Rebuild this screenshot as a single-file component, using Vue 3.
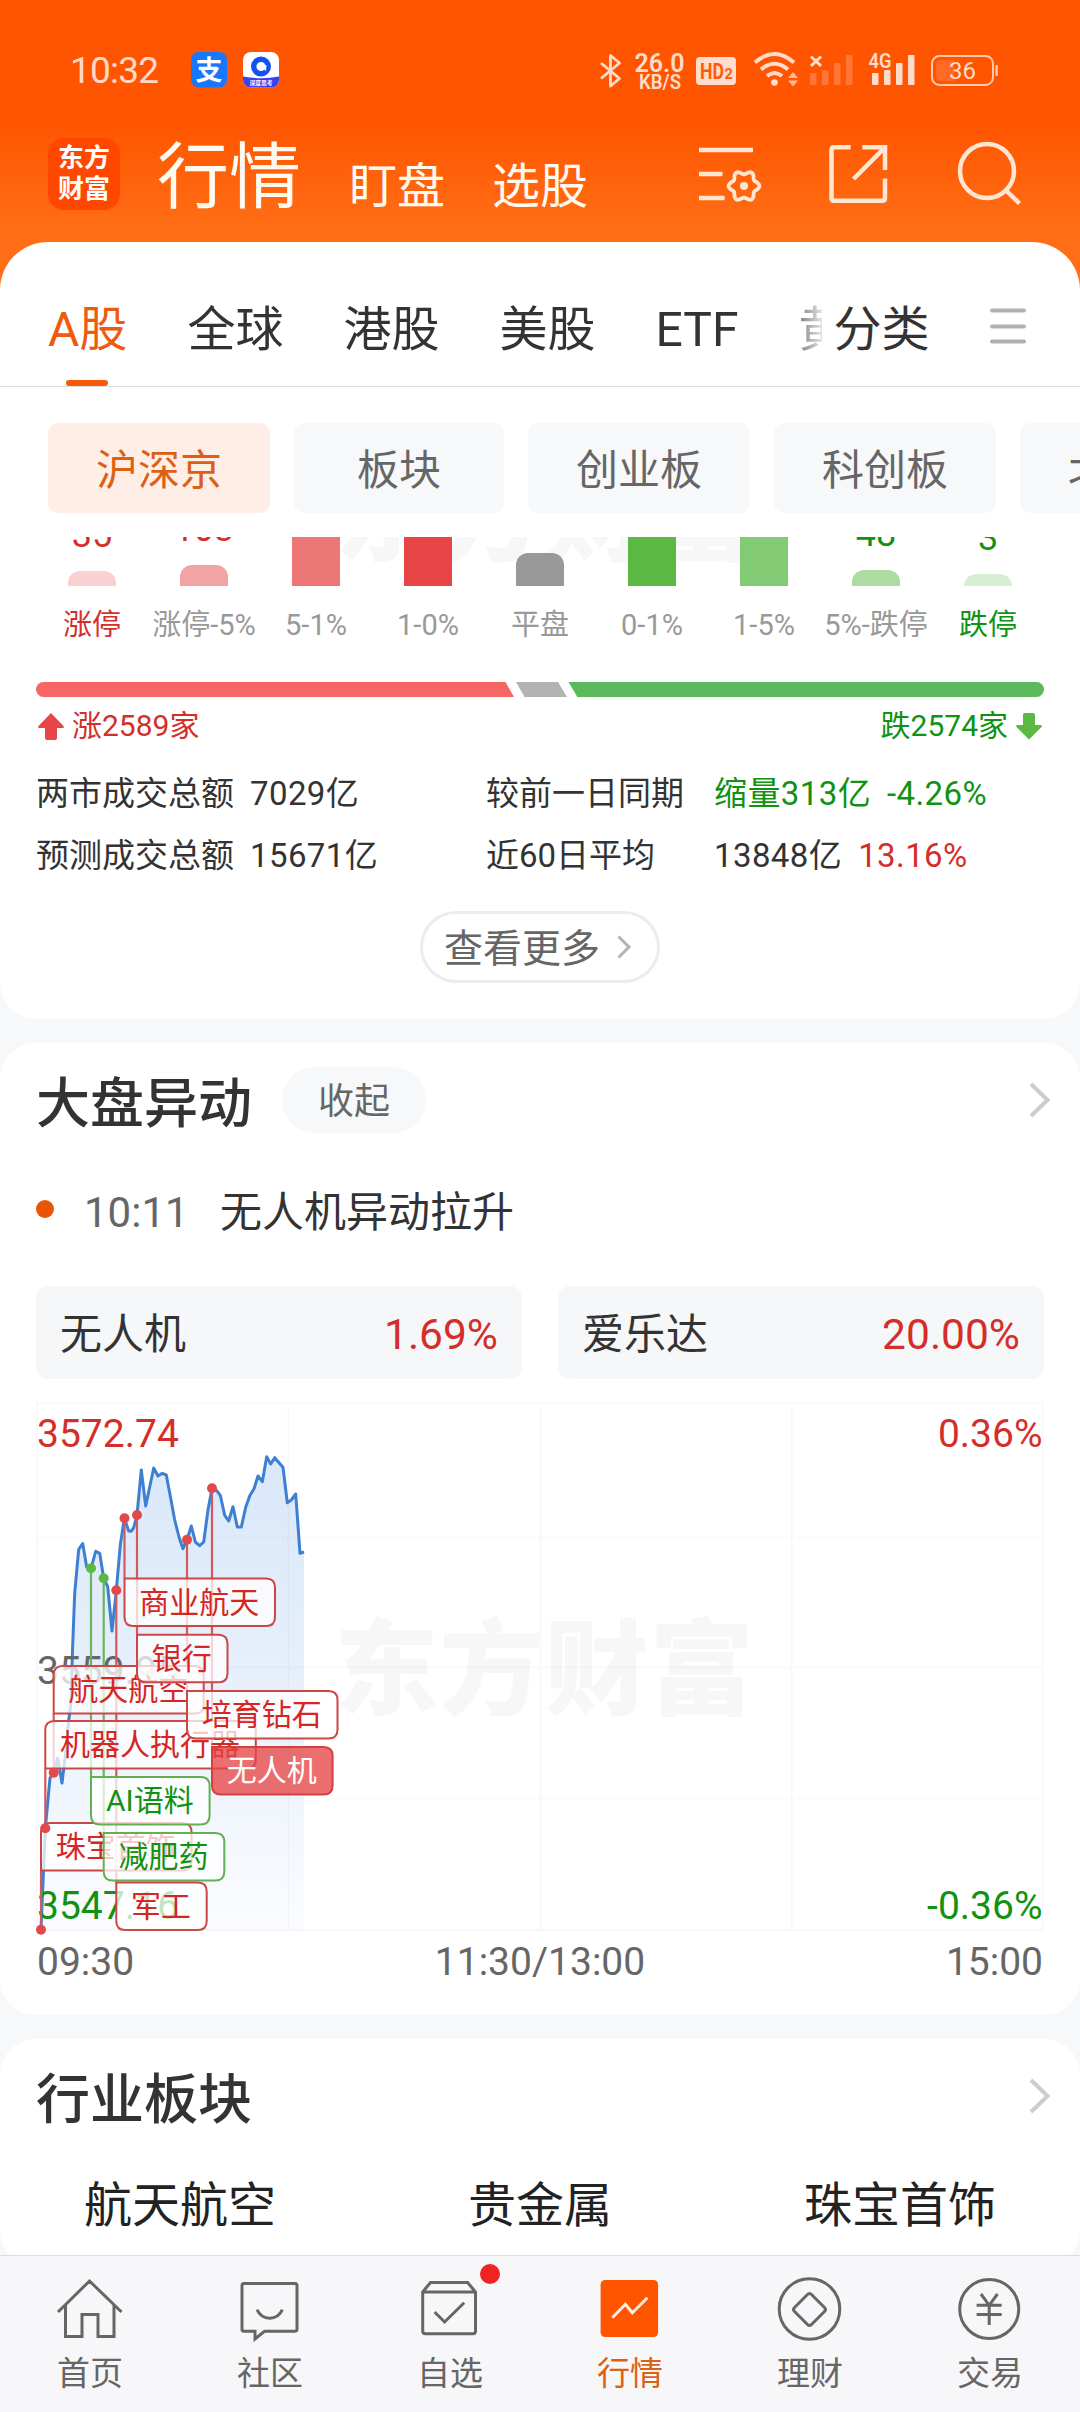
<script setup>
const marketTabs = ['全球', '港股', '美股', 'ETF', '黄金']
const chips = ['沪深京', '板块', '创业板', '科创板', '北交所']

const columns = [
  { label: '涨停', tone: 'up', count: '35', side: 'up', h: 15, color: '#f9d1d1' },
  { label: '涨停-5%', tone: '', count: '103', side: 'up', h: 21, color: '#f2a3a5' },
  { label: '5-1%', tone: '', h: 90, color: '#ed7676' },
  { label: '1-0%', tone: '', h: 90, color: '#e74646' },
  { label: '平盘', tone: '', h: 33, color: '#999999' },
  { label: '0-1%', tone: '', h: 90, color: '#5bb843' },
  { label: '1-5%', tone: '', h: 90, color: '#82ca74' },
  { label: '5%-跌停', tone: '', count: '48', side: 'down', h: 16, color: '#addca1' },
  { label: '跌停', tone: 'down', count: '3', side: 'down', h: 12, color: '#d6eed1' }
]

const price = [
  [41, 1929.7], [45.3, 1828.3], [50, 1778], [53.7, 1772.7], [57.7, 1758], [62, 1783], [66, 1750], [68.5, 1722],
  [71, 1703], [72.3, 1656], [74.7, 1593], [78.7, 1549.3], [82.7, 1543.5], [86.7, 1567], [91, 1568.3], [95.7, 1551.3],
  [99.7, 1553.3], [103.7, 1578.3], [107.7, 1586.7], [112, 1631], [116.3, 1590.3], [120.3, 1545], [124.3, 1518.3],
  [128.7, 1531], [131, 1531.3], [133.6, 1528], [137, 1515], [141.3, 1470], [145.7, 1506], [149.7, 1487], [153.7, 1468],
  [158, 1476], [162.3, 1473.3], [166.3, 1475], [170.7, 1498.3], [174.7, 1520], [179, 1537], [183, 1548.7],
  [187, 1539.7], [191.3, 1526], [195.3, 1542], [199.7, 1545.7], [203.7, 1542], [208, 1510], [212, 1488.3],
  [216.7, 1490.7], [220.3, 1495.3], [224.7, 1515.3], [228.7, 1521], [233, 1506.7], [237.3, 1527], [241.3, 1527],
  [245.7, 1507.3], [250, 1495.3], [254, 1488.7], [258, 1476], [262.3, 1481.7], [266.7, 1456.7], [270.7, 1464],
  [274.7, 1457.7], [279, 1462.7], [283, 1467.3], [287.3, 1502.7], [291.3, 1500], [295.7, 1494], [300, 1553.3], [304, 1552]
]
const line = price.map(p => p.join(',')).join(' ')
const area = line + ' 304,1930 41,1930'

// dot: point on the price line; top/w: the flag hung on the pole at that x
const flags = [
  { text: '航天航空', x: 53.7, top: 1666, w: 150, dot: 1772.7, tone: 'r', below: true },
  { text: '机器人执行器', x: 45.3, top: 1721, w: 210.5, dot: 1828.3, tone: 'r', below: true },
  { text: '珠宝首饰', x: 41, top: 1823, w: 150.5, dot: 1929.7, tone: 'r', below: true },
  { text: '商业航天', x: 124.5, top: 1578.5, w: 150.5, dot: 1518.3, tone: 'r' },
  { text: '银行', x: 137, top: 1634.7, w: 90.5, dot: 1515, tone: 'r' },
  { text: '培育钻石', x: 187, top: 1691, w: 150.5, dot: 1539.7, tone: 'r' },
  { text: '无人机', x: 212, top: 1747, w: 120.6, dot: 1488.3, tone: 'solid' },
  { text: 'AI语料', x: 91, top: 1777, w: 118.6, dot: 1568.3, tone: 'g' },
  { text: '减肥药', x: 103.7, top: 1833, w: 120.6, dot: 1578.3, tone: 'g' },
  { text: '军工', x: 116.3, top: 1882.5, w: 90.4, dot: 1590.3, tone: 'r' }
]
const H = 47.6
const R = 9
function flagPath(f) {
  const { x, w, top: y } = f
  const r = x + w
  const b = y + H
  if (f.below) {
    return `M${x} ${b}V${y + R}Q${x} ${y} ${x + R} ${y}H${r - R}Q${r} ${y} ${r} ${y + R}V${b - R}Q${r} ${b} ${r - R} ${b}Z`
  }
  return `M${x} ${y}H${r - R}Q${r} ${y} ${r} ${y + R}V${b - R}Q${r} ${b} ${r - R} ${b}H${x + R}Q${x} ${b} ${x} ${b - R}Z`
}

function gear(cx, cy) {
  let d = ''
  for (let i = 0; i < 72; i++) {
    const a = (i * Math.PI) / 36
    const r = 13.5 + 1.9 * Math.cos(6 * a)
    d += (i ? 'L' : 'M') + (cx + r * Math.cos(a)).toFixed(2) + ' ' + (cy + r * Math.sin(a)).toFixed(2)
  }
  return d + 'Z'
}
const gearPath = gear(744, 186)
</script>

<template>
  <div class="screen">
    <div class="status">
      <span class="clock">10:32</span>
      <svg class="apps" width="90" height="38" viewBox="190 52 90 38">
        <rect x="191" y="53" width="36" height="35.500" rx="8" fill="#1677ff" />
        <text x="209" y="81" font-size="27" font-weight="700" fill="#fff" text-anchor="middle">支</text>
        <clipPath id="appClip"><rect x="243" y="53" width="36" height="35.500" rx="8" /></clipPath>
        <g clip-path="url(#appClip)">
          <rect x="243" y="53" width="36" height="36" fill="#fff" />
          <path d="M243 77.500Q261 81 279 77.500V89H243Z" fill="#3a3df0" />
          <circle cx="261" cy="67.500" r="7.300" fill="none" stroke="#1350f0" stroke-width="5.400" />
          <path d="M261 67.500L266.500 66L266 72Z" fill="#fff" />
          <text x="261" y="86" font-size="5.800" font-weight="700" fill="#fff" text-anchor="middle">深度思考</text>
        </g>
      </svg>
      <svg class="signals" width="408" height="44" viewBox="596 48 408 44">
        <path d="M601 63L619.500 78.500L610.500 86V55.500L619.500 63L601 78.500" fill="none" stroke="#ffdccb" stroke-width="2.800" stroke-linejoin="round" />
        <text x="659.500" y="71.500" font-size="25" font-weight="600" text-anchor="middle" textLength="50" lengthAdjust="spacingAndGlyphs">26.0</text>
        <text x="660" y="88.500" font-size="19.500" font-weight="600" text-anchor="middle" textLength="42" lengthAdjust="spacingAndGlyphs">KB/S</text>
        <rect x="696" y="57" width="40" height="28" rx="4" fill="#ffdccb" />
        <text x="700" y="79" font-size="22" font-weight="700" class="cut" textLength="24" lengthAdjust="spacingAndGlyphs">HD</text>
        <text x="724.500" y="79" font-size="14.500" font-weight="700" class="cut">2</text>
        <g fill="none" stroke="#ffdccb" stroke-width="4">
          <path d="M755 62.500Q774.500 45.500 794 62.500" />
          <path d="M761 69.500Q774.500 58 788 69.500" />
          <path d="M767 76Q774.500 70 782 76" />
        </g>
        <circle cx="774.500" cy="82.500" r="3.300" fill="#ffdccb" />
        <path d="M788 78L793 72L798 78ZM788 80.500H798L793 86.500Z" fill="#ffb994" />
        <path d="M811 56.500L821 66M821 56.500L811 66" stroke="#ffdccb" stroke-width="3" />
        <g fill="#ff7637">
          <rect x="810" y="73" width="6.500" height="12" rx="1" />
          <rect x="822" y="70" width="6.500" height="15" rx="1" />
          <rect x="834" y="63" width="6.500" height="22" rx="1" />
          <rect x="846" y="55" width="6.500" height="30" rx="1" />
        </g>
        <text x="880" y="68" font-size="21" font-weight="600" text-anchor="middle" textLength="23" lengthAdjust="spacingAndGlyphs">4G</text>
        <g fill="#ffdccb">
          <rect x="872" y="73" width="6.500" height="12" rx="1" />
          <rect x="884" y="70" width="6.500" height="15" rx="1" />
          <rect x="896" y="63" width="6.500" height="22" rx="1" />
          <rect x="908" y="55" width="6.500" height="30" rx="1" />
        </g>
        <rect x="932" y="56" width="61" height="29" rx="7.500" fill="none" stroke="#ffc9ac" stroke-width="2" />
        <path d="M941 60H954V81H941Q936 81 936 76V65Q936 60 941 60Z" fill="#ff6a25" />
        <rect x="995.300" y="65" width="2.500" height="11" rx="1" fill="#ffc9ac" />
        <text x="962.500" y="79" font-size="24" text-anchor="middle">36</text>
      </svg>
    </div>

    <header class="head">
      <div class="logo"><span>东方</span><span>财富</span></div>
      <div class="main-title">行情</div>
      <div class="sub-title">盯盘</div>
      <div class="sub-title">选股</div>
      <div class="tools">
        <svg width="72" height="72" viewBox="694 138 72 72">
          <path d="M699 150H753M699 174H722.500M699 198H724.600" stroke-width="4.300" />
          <path :d="gearPath" stroke-width="3.800" />
          <circle cx="744" cy="186" r="4" class="dot" />
        </svg>
        <svg width="72" height="72" viewBox="822 138 72 72">
          <path d="M850.600 147.300H834Q831.500 147.300 831.500 149.800V198Q831.500 200.700 834 200.700H882.500Q885 200.700 885 198V178.500" />
          <path d="M862.300 147.300H885V170M885 147.300L853.500 179" />
        </svg>
        <svg width="72" height="72" viewBox="954 138 72 72">
          <circle cx="987" cy="171" r="27" />
          <path d="M1005.500 190L1019.500 203.500" />
        </svg>
      </div>
    </header>

    <main class="body">
      <section class="panel">
        <nav class="tabs">
          <div class="tab active">A股</div>
          <div class="tab-strip">
            <div v-for="t in marketTabs" :key="t" class="tab">{{ t }}</div>
          </div>
          <div class="tab category">分类</div>
          <svg class="menu" width="36" height="36" viewBox="0 0 36 36">
            <path d="M2 2.500H34M2 18.500H34M2 33.500H34" stroke="#b1b1b1" stroke-width="4" stroke-linecap="round" />
          </svg>
        </nav>
        <div class="chips">
          <div v-for="(c, i) in chips" :key="c" class="chip" :class="{ on: i === 0 }">{{ c }}</div>
        </div>

        <div class="histogram">
          <div class="watermark">东方财富</div>
          <div v-for="c in columns" :key="c.label" class="col">
            <span v-if="c.count" class="count" :class="c.side">{{ c.count }}</span>
            <i class="bar" :style="{ height: c.h + 'px', background: c.color }"></i>
          </div>
        </div>
        <div class="col-labels">
          <span v-for="c in columns" :key="c.label" :class="c.tone">{{ c.label }}</span>
        </div>

        <svg class="ratio" width="1008" height="15" viewBox="36 0 1008 15">
          <path d="M505.500 0H43.500A7.500 7.500 0 0 0 43.500 15H514Z" fill="#f76565" />
          <path d="M516 0H558L567 15H524.500Z" fill="#b3b3b3" />
          <path d="M568.500 0H1036.500A7.500 7.500 0 0 1 1036.500 15H577.300Z" fill="#5aba5c" />
        </svg>
        <div class="totals">
          <div class="total up">
            <svg width="26" height="27" viewBox="0 0 26 27"><path d="M13 0L25.500 13Q26.500 15 24.500 15H19V25Q19 27 17 27H9Q7 27 7 25V15H1.500Q-.5 15 .5 13Z" fill="#e74646" /></svg>
            <span>涨2589家</span>
          </div>
          <div class="total down">
            <span>跌2574家</span>
            <svg width="26" height="27" viewBox="0 0 26 27"><path d="M13 26.500L25.500 14Q26.500 12 24.500 12H19V2Q19 0 17 0H9Q7 0 7 2V12H1.500Q-.5 12 .5 14Z" fill="#5bb843" /></svg>
          </div>
        </div>

        <div class="stats">
          <div class="stat"><span>两市成交总额</span><span class="num">7029亿</span></div>
          <div class="stat wide"><span>较前一日同期</span><span class="num down">缩量313亿</span><span class="num down">-4.26%</span></div>
          <div class="stat"><span>预测成交总额</span><span class="num">15671亿</span></div>
          <div class="stat wide"><span>近60日平均</span><span class="num">13848亿</span><span class="num up">13.16%</span></div>
        </div>
        <div class="more">
          <span>查看更多</span>
          <svg width="14" height="24" viewBox="0 0 14 24"><path d="M1.500 1.500L12 12L1.500 22.500" fill="none" stroke="#b3b3b3" stroke-width="3" /></svg>
        </div>
      </section>

      <section class="card">
        <div class="card-head">
          <h2>大盘异动</h2>
          <span class="fold">收起</span>
          <svg class="arrow" width="22" height="36" viewBox="0 0 22 36"><path d="M2 2L18.500 18L2 34" /></svg>
        </div>
        <div class="event"><i></i><time>10:11</time><span>无人机异动拉升</span></div>
        <div class="movers">
          <div class="mover"><span>无人机</span><b>1.69%</b></div>
          <div class="mover"><span>爱乐达</span><b>20.00%</b></div>
        </div>
        <svg class="chart" width="1008" height="586" viewBox="36 1399 1008 586">
          <defs>
            <linearGradient id="areaFill" x1="0" y1="1457" x2="0" y2="1930" gradientUnits="userSpaceOnUse">
              <stop offset="0" stop-color="#dae8fa" />
              <stop offset=".45" stop-color="#e6effb" />
              <stop offset="1" stop-color="#fbfcff" />
            </linearGradient>
          </defs>
          <text x="544.500" y="1707" class="mark" text-anchor="middle">东方财富</text>
          <polygon :points="area" fill="url(#areaFill)" />
          <g fill="none" stroke="#000" stroke-opacity=".028" stroke-width="2">
            <rect x="37" y="1403.500" width="1005.500" height="526.500" />
            <path d="M288.500 1406V1930M540.500 1406V1930M791.700 1406V1930M37 1667.500H1042" />
            <path d="M38 1536.700H1042M38 1798.700H1042" stroke-dasharray="2 2" stroke-width="1.500" />
          </g>
          <polyline :points="line" fill="none" stroke="#3d80d2" stroke-width="3" stroke-linejoin="round" />
          <g class="scale">
            <text x="37" y="1447" class="t-up">3572.74</text>
            <text x="1042.500" y="1447" class="t-up" text-anchor="end">0.36%</text>
            <text x="37" y="1683.500">3559.95</text>
            <text x="37" y="1919" class="t-down">3547.16</text>
            <text x="1042.500" y="1919" class="t-down" text-anchor="end">-0.36%</text>
            <text x="37" y="1975">09:30</text>
            <text x="540" y="1975" text-anchor="middle">11:30/13:00</text>
            <text x="1043" y="1975" text-anchor="end">15:00</text>
          </g>
          <path v-for="f in flags" :key="'p' + f.text" :d="`M${f.x} ${f.dot}V${f.below ? f.top + H : f.top}`" class="pole" :class="f.tone" />
          <g v-for="f in flags" :key="f.text" class="flag" :class="f.tone">
            <path :d="flagPath(f)" />
            <text :x="f.x + f.w / 2 - 0.5" :y="f.top + 34" text-anchor="middle">{{ f.text }}</text>
          </g>
          <circle v-for="f in flags" :key="'d' + f.text" :cx="f.x" :cy="f.dot" r="5" class="pin" :class="f.tone" />
        </svg>
      </section>

      <section class="card">
        <div class="card-head">
          <h2>行业板块</h2>
          <svg class="arrow" width="22" height="36" viewBox="0 0 22 36"><path d="M2 2L18.500 18L2 34" /></svg>
        </div>
        <div class="sectors"><span>航天航空</span><span>贵金属</span><span>珠宝首饰</span></div>
      </section>
    </main>

    <footer class="bottom">
      <div class="item">
        <svg width="80" height="72" viewBox="0 0 80 72"><path d="M8 39L39.500 8L71.500 39M15.500 32V63.500H32V41.500H48V63.500H64V32" /></svg>
        <span>首页</span>
      </div>
      <div class="item">
        <svg width="80" height="72" viewBox="0 0 80 72"><path d="M14 10.500H65Q67 10.500 67 12.500V56Q67 58.300 65 58.300H34.500L25 66V58.300H14Q12 58.300 12 56V12.500Q12 10.500 14 10.500ZM27 36.700Q31 45.300 39.700 45.300T52.400 36.700" /></svg>
        <span>社区</span>
      </div>
      <div class="item">
        <svg width="80" height="72" viewBox="0 0 80 72">
          <path d="M12.700 19L20.500 9.500H57.600L65.500 19V58Q65.500 60.700 63 60.700H15.500Q12.700 60.700 12.700 58ZM12.700 19H65.500M24.600 39L34.600 49L54.200 29.700" />
          <circle cx="80" cy="1" r="10" class="badge" />
        </svg>
        <span>自选</span>
      </div>
      <div class="item current">
        <svg width="80" height="72" viewBox="0 0 80 72">
          <rect x="10.600" y="7" width="57.500" height="57" rx="4.500" />
          <path d="M22.300 44.700L35.400 31.300L42.300 39.700L57.400 24.700" />
        </svg>
        <span>行情</span>
      </div>
      <div class="item">
        <svg width="80" height="72" viewBox="0 0 80 72"><circle cx="39.500" cy="36" r="30.300" /><path d="M37.500 21.500Q39.500 19.500 41.500 21.500L54.500 34.500Q56.500 36.500 54.500 38.500L41.500 51.500Q39.500 53.500 37.500 51.500L24.500 38.500Q22.500 36.500 24.500 34.500Z" /></svg>
        <span>理财</span>
      </div>
      <div class="item">
        <svg width="80" height="72" viewBox="0 0 80 72"><circle cx="39.200" cy="36" r="29.500" /><path d="M31 21L39.200 32.300L47.500 21M39.200 32.300V52M26.600 32.300H51.700M26.600 41.500H51.700" /></svg>
        <span>交易</span>
      </div>
    </footer>
  </div>
</template>

<style>
body {
  margin: 0;
}
</style>

<style scoped>
.screen {
  width: 1080px;
  height: 2412px;
  display: flex;
  flex-direction: column;
  overflow: hidden;
  font-family: Roboto, "Noto Sans CJK SC", sans-serif;
  color: #333;
  background: linear-gradient(#ff5500 0, #ff5500 122px, #ff6d15 225px, #ff711a 300px, #f6f8fa 300px);
}
svg {
  display: block;
  flex: none;
  overflow: visible;
}
.up {
  color: #d42e2a;
}
.down {
  color: #109212;
}

.status {
  display: flex;
  align-items: center;
  height: 44px;
  padding: 48px 76px 0 70px;
}
.clock {
  width: 120px;
  font-size: 37px;
  line-height: 44px;
  letter-spacing: -0.8px;
  color: #ffd9c5;
  padding-top: 2px;
}
.signals {
  margin-left: auto;
}
.signals text {
  fill: #ffdccb;
}
.signals text.cut {
  fill: #ff5a0a;
}

.head {
  display: flex;
  align-items: flex-start;
  height: 104px;
  padding: 46px 54px 0 48px;
  color: #fffaf0;
}
.logo {
  width: 72px;
  height: 72px;
  border-radius: 16px;
  background: #ff4700;
  color: #fff;
  display: flex;
  flex-direction: column;
  align-items: center;
  justify-content: center;
  font-weight: 700;
  font-size: 26px;
  line-height: 31px;
}
.main-title {
  margin: 4px 0 0 37px;
  font-size: 72px;
  line-height: 72px;
}
.sub-title {
  margin: 25px 0 0 48px;
  font-size: 48px;
  line-height: 48px;
}
.sub-title + .sub-title {
  margin-left: 47px;
}
.tools {
  display: flex;
  gap: 56px;
  margin-left: auto;
}
.tools svg {
  fill: none;
  stroke: #ffe6d3;
  stroke-width: 4.5;
}
.tools svg:last-child {
  margin-left: 4px;
}
.tools .dot {
  fill: #ffe6d3;
  stroke: none;
}

.body {
  flex: 1;
  min-height: 0;
  overflow: hidden;
  background: linear-gradient(transparent 100px, #f6f8fa 100px);
}
.panel {
  height: 777px;
  background: #fff;
  border-radius: 48px 48px 36px 36px;
  overflow: hidden;
}
.tabs {
  display: flex;
  height: 144px;
  padding: 0 54px 0 48px;
  border-bottom: 1px solid #dcdcdc;
  font-size: 48px;
  line-height: 175px;
}
.tab {
  flex: none;
}
.tab.active {
  position: relative;
  width: 79.5px;
  margin-right: 60px;
  color: #ee5a0e;
}
.tab.active::after {
  content: "";
  position: absolute;
  left: 18px;
  bottom: 0;
  width: 42px;
  height: 6px;
  border-radius: 3px;
  background: #f85a0a;
}
.tab-strip {
  display: flex;
  gap: 60px;
  width: 634px;
  overflow: hidden;
  -webkit-mask-image: linear-gradient(90deg, #000 594px, transparent 640px);
  mask-image: linear-gradient(90deg, #000 594px, transparent 640px);
}
.category {
  margin-left: 12px;
}
.menu {
  margin: 66px 0 0 auto;
}
.chips {
  display: flex;
  gap: 24px;
  margin: 36px 0 24px 48px;
}
.chip {
  flex: none;
  box-sizing: border-box;
  min-width: 210px;
  padding: 0 48px;
  text-align: center;
  font-size: 42px;
  line-height: 95px;
  height: 90px;
  border-radius: 10px;
  background: #f7f8fa;
  color: #666;
}
.chip.on {
  background: #ffeee6;
  color: #dc6014;
}

.histogram {
  position: relative;
  display: flex;
  height: 49px;
  margin: 0 36px;
  overflow: hidden;
}
.watermark {
  position: absolute;
  left: 298px;
  bottom: 9px;
  font-size: 104px;
  line-height: 118px;
  font-weight: 900;
  letter-spacing: 1px;
  white-space: nowrap;
  color: #f7f7f7;
}
.col {
  position: relative;
  flex: 1;
  display: flex;
  flex-direction: column;
  align-items: center;
  justify-content: flex-end;
}
.bar {
  flex: none;
  width: 48px;
  border-radius: 12px 12px 0 0;
}
.count {
  font-size: 36px;
  line-height: 36px;
  margin-bottom: 18px;
}
.col-labels {
  display: flex;
  margin: 20px 36px 0;
  font-size: 29px;
  line-height: 38px;
  color: #999;
}
.col-labels span {
  flex: 1;
  width: 112px;
  text-align: center;
  white-space: nowrap;
}
.col-labels .up {
  color: #d42e2a;
}
.col-labels .down {
  color: #109212;
}
.ratio {
  margin: 38px 0 0 36px;
}
.totals {
  display: flex;
  justify-content: space-between;
  margin: 12px 38px 0;
  font-size: 30px;
  line-height: 34px;
}
.total {
  display: flex;
  align-items: center;
  gap: 8px;
}
.stats {
  display: grid;
  grid-template-columns: 450px 1fr;
  margin: 20px 0 0 36px;
  font-size: 33px;
  line-height: 62px;
}
.stat {
  display: flex;
  gap: 16px;
}
.stat.wide span:first-child {
  width: 212px;
}
.num {
  letter-spacing: 0.4px;
}
.more {
  display: flex;
  align-items: center;
  box-sizing: border-box;
  width: 240px;
  height: 72px;
  margin: 24px auto 0;
  padding-left: 21px;
  gap: 17px;
  border: 3px solid #ececec;
  border-radius: 36px;
  font-size: 39px;
  line-height: 60px;
  color: #666;
}
.more span {
  padding-top: 4px;
}

.card {
  margin-top: 24px;
  padding: 24px 36px 30px;
  background: #fff;
  border-radius: 36px;
}
.card-head {
  display: flex;
  align-items: center;
  height: 66px;
}
h2 {
  margin: 0;
  padding-top: 10px;
  font-size: 54px;
  line-height: 56px;
  font-weight: 500;
}
.fold {
  box-sizing: border-box;
  width: 144px;
  height: 66px;
  padding-top: 5px;
  margin-left: 30px;
  text-align: center;
  border-radius: 33px;
  background: #f6f8fa;
  font-size: 36px;
  line-height: 61px;
  color: #666;
}
.arrow {
  margin: 0 -7px 0 auto;
  fill: none;
  stroke: #ccc;
  stroke-width: 4;
}
.event {
  display: flex;
  align-items: center;
  margin-top: 49px;
  font-size: 42px;
  line-height: 61px;
}
.event i {
  width: 18px;
  height: 18px;
  margin: -8px 30px 0 0;
  border-radius: 50%;
  background: #e95504;
}
.event time {
  width: 136px;
  color: #666;
}
.movers {
  display: flex;
  gap: 36px;
  margin-top: 43px;
}
.mover {
  flex: 1;
  display: flex;
  justify-content: space-between;
  height: 93px;
  padding: 0 24px;
  border-radius: 12px;
  background: #f6f7f9;
  font-size: 42px;
  line-height: 98px;
}
.mover b {
  font-weight: 400;
  font-size: 42.5px;
  color: #d42e2a;
}
.chart {
  margin-top: 20px;
}
.mark {
  font-size: 104px;
  font-weight: 900;
  letter-spacing: 1px;
  fill: #f7f7f7;
}
.scale text {
  font-size: 39px;
  fill: #666;
}
.scale .t-up {
  fill: #d42e2a;
}
.scale .t-down {
  fill: #109212;
}
.pole {
  stroke: #d25a5c;
  stroke-width: 2.2;
}
.pole.g {
  stroke: #69b55a;
}
.flag path {
  fill: #fff;
  fill-opacity: 0.75;
  stroke: #cd4646;
  stroke-width: 2;
}
.flag.g path {
  stroke: #63b052;
}
.flag.solid path {
  fill: #e74646;
  fill-opacity: 0.78;
  stroke: #d24040;
}
.flag text {
  font-size: 30px;
  fill: #d62624;
}
.flag.g text {
  fill: #109212;
}
.flag.solid text {
  fill: #fff;
}
.pin {
  fill: #e14a4a;
}
.pin.g {
  fill: #5bb843;
}
.sectors {
  display: flex;
  margin: 47px -36px 0;
  font-size: 48px;
  line-height: 60px;
  color: #222;
}
.sectors span {
  flex: 1;
  text-align: center;
}

.bottom {
  flex: none;
  display: flex;
  height: 156px;
  border-top: 1px solid #dddde0;
  background: #f7f7f9;
}
.item {
  flex: 1;
  display: flex;
  flex-direction: column;
  align-items: center;
  padding-top: 17px;
  font-size: 33px;
  line-height: 40px;
  color: #666;
}
.item svg {
  margin-bottom: 9px;
  fill: none;
  stroke: #666;
  stroke-width: 3;
}
.item .badge {
  fill: #f02323;
  stroke: none;
}
.current {
  color: #dd6012;
}
.current rect {
  fill: #ff5500;
  stroke: none;
}
.current path {
  stroke: #ffeadb;
}
</style>
